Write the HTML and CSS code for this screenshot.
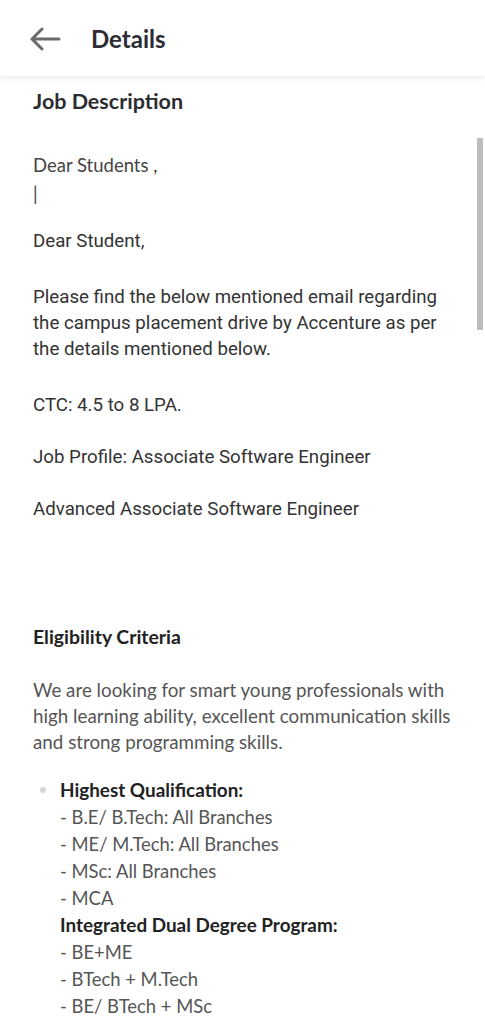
FILE: index.html
```html
<!DOCTYPE html>
<html lang="en">
<head>
<meta charset="utf-8">
<title>Details</title>
<link rel="stylesheet" href="styles.css">
</head>
<body>
<header class="topbar">
  <button class="back" aria-label="Back">
    <svg width="32" height="24" viewBox="0 0 32 24"><path d="M30 12H3M13 2L3 12l10 10" fill="none" stroke="#6b6b6b" stroke-width="3" stroke-linecap="round" stroke-linejoin="round"/></svg>
  </button>
  <h1 class="title">Details</h1>
</header>
<main class="content">
  <h2 class="section-title">Job Description</h2>
  <div class="desc">
    <p class="lato-line">Dear Students ,</p>
    <p class="lato-line cursor">|</p>
    <div class="email">
      <p class="gap-lg">Dear Student,</p>
      <p class="gap-lg">Please find the below mentioned email regarding the campus placement drive by Accenture as per the details mentioned below.</p>
      <p>CTC: 4.5 to 8 LPA.</p>
      <p>Job Profile: Associate Software Engineer</p>
      <p>Advanced Associate Software Engineer</p>
    </div>
  </div>
  <h3 class="sub-title">Eligibility Criteria</h3>
  <p class="intro">We are looking for smart young professionals with high learning ability, excellent communication skills and strong programming skills.</p>
  <ul class="quals">
    <li>
      <strong>Highest Qualification:</strong><br>
      - B.E/ B.Tech: All Branches<br>
      - ME/ M.Tech: All Branches<br>
      - MSc: All Branches<br>
      - MCA<br>
      <strong>Integrated Dual Degree Program:</strong><br>
      - BE+ME<br>
      - BTech + M.Tech<br>
      - BE/ BTech + MSc
    </li>
  </ul>
</main>
<div class="scrollbar"></div>
</body>
</html>
```
FILE: styles.css
```css
html, body {
  margin: 0;
  padding: 0;
  background: #ffffff;
}
body {
  font-family: Lato, "Liberation Sans", sans-serif;
  color: #333;
  overflow: hidden;
}
.topbar {
  height: 76px;
  display: flex;
  align-items: center;
  padding-left: 29px;
  background: #fff;
  box-shadow: 0 2px 6px rgba(0,0,0,0.09);
  position: relative;
  z-index: 1;
}
.back {
  border: 0;
  background: none;
  padding: 0;
  width: 33px;
  height: 26px;
  display: flex;
  align-items: center;
  margin-top: 1px;
}
.title {
  margin: 0 0 0 29px;
  font-size: 24px;
  font-weight: 700;
  color: #2c2c34;
}
.content {
  padding: 13px 30px 0 33px;
}
.section-title {
  margin: 0;
  font-size: 21.5px;
  font-weight: 700;
  color: #2c2c30;
  line-height: 24px;
}
.desc {
  margin-top: 38px;
}
.lato-line {
  margin: 0;
  font-size: 18.5px;
  line-height: 29px;
  color: #444;
}
.cursor {
  margin-bottom: 19px;
}
.email {
  font-family: Roboto, "Liberation Sans", sans-serif;
  font-size: 18.7px;
  line-height: 26px;
  color: #333;
}
.email p {
  margin: 0 0 26px;
}
.email p.gap-lg {
  margin-bottom: 30px;
}
.sub-title {
  margin: 103px 0 0;
  font-size: 19.4px;
  font-weight: 700;
  color: #222;
  line-height: 24px;
}
.intro {
  margin: 28px 0 0;
  font-size: 18.8px;
  line-height: 26px;
  color: #555;
}
.quals {
  margin: 22px 0 0;
  padding-left: 27px;
  list-style: none;
  font-size: 18.4px;
  line-height: 27px;
  color: #555;
}
.quals li {
  position: relative;
}
.quals li::before {
  content: "";
  position: absolute;
  left: -20px;
  top: 10px;
  width: 6px;
  height: 6px;
  border-radius: 50%;
  background: #d6d6d6;
}
.quals strong {
  color: #222;
  font-weight: 700;
  font-size: 18.9px;
  line-height: 1;
}
.scrollbar {
  position: absolute;
  left: 477px;
  top: 138px;
  width: 6px;
  height: 192px;
  background: #bdbdbd;
}
```
